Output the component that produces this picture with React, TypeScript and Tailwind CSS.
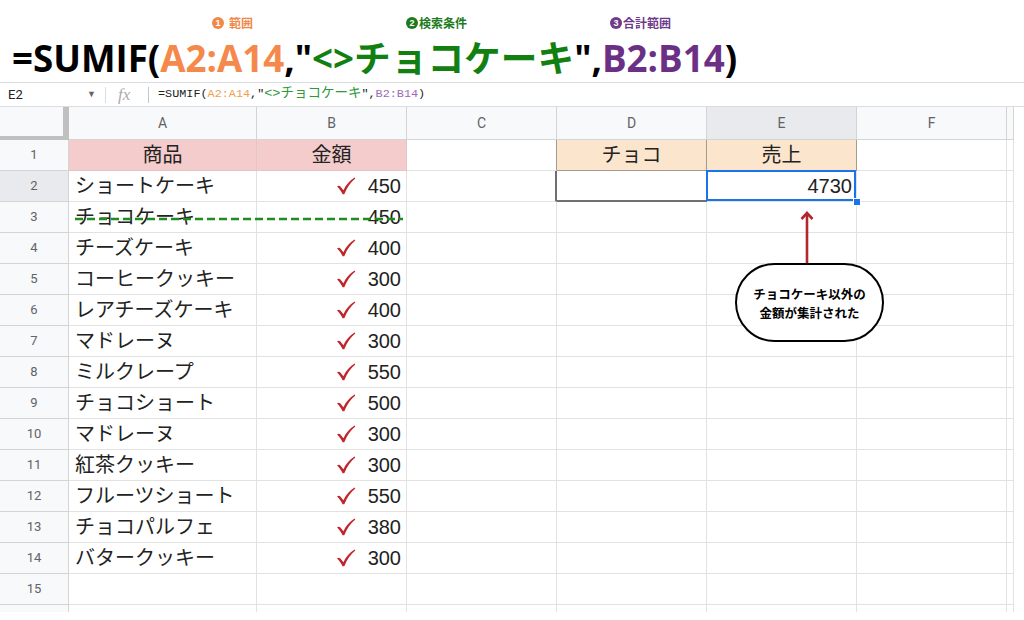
import React from "react";

const items: [string, string, boolean][] = [
  ["ショートケーキ", "450", true],
  ["チョコケーキ", "450", false],
  ["チーズケーキ", "400", true],
  ["コーヒークッキー", "300", true],
  ["レアチーズケーキ", "400", true],
  ["マドレーヌ", "300", true],
  ["ミルクレープ", "550", true],
  ["チョコショート", "500", true],
  ["マドレーヌ", "300", true],
  ["紅茶クッキー", "300", true],
  ["フルーツショート", "550", true],
  ["チョコパルフェ", "380", true],
  ["バタークッキー", "300", true],
];

const letters = ["A", "B", "C", "D", "E", "F", ""];

function Check() {
  return (
    <svg width="20" height="18" viewBox="0 0 20 18" className="shrink-0">
      <path
        d="M1 9.6 C2.3 8.6 3.4 8.6 4.4 9.6 L7.4 13.2 C10 8 13.6 3.6 18.6 0.6 L19.3 1.6 C14.8 5.2 11.2 10.2 8.3 17.2 L6.6 17.2 C5.1 14.2 3.1 11.6 1 9.6 Z"
        fill="#c0272d"
      />
    </svg>
  );
}

function Num({ n, color }: { n: string; color: string }) {
  return (
    <span
      className="flex h-[12px] w-[12px] shrink-0 items-center justify-center rounded-full text-[9px] leading-none text-white [font-family:'Liberation_Sans',sans-serif]"
      style={{ backgroundColor: color }}
    >
      {n}
    </span>
  );
}

function HeaderLabels() {
  return (
    <div className="flex h-[16px] text-[12px] font-bold leading-[16px] [font-family:'Noto_Sans_CJK_JP',sans-serif]">
      <div className="w-[212px]" />
      <div className="flex w-[194px] items-center gap-[5px] text-[#f0884a]">
        <Num n="1" color="#f0884a" />
        <span>範囲</span>
      </div>
      <div className="flex w-[204px] items-center gap-[1px] text-[#1d7a1d]">
        <Num n="2" color="#1d7a1d" />
        <span>検索条件</span>
      </div>
      <div className="flex items-center gap-[1px] text-[#6e3a8a]">
        <Num n="3" color="#6e3a8a" />
        <span>合計範囲</span>
      </div>
    </div>
  );
}

function BigFormula() {
  return (
    <div className="mt-[9px] h-[36px] pl-[12px] text-[36.7px] font-bold leading-[36px] whitespace-nowrap text-black [font-family:'Open_Sans','Noto_Sans_CJK_JP',sans-serif]">
      =SUMIF(<span className="text-[#f5894b]">A2:A14</span>,"
      <span className="text-[#118011]">&lt;&gt;チョコケーキ</span>",
      <span className="text-[#6b2f86]">B2:B14</span>)
    </div>
  );
}

function FormulaBar() {
  return (
    <div className="mt-[6px] flex h-[25px] items-center border-y border-[#dadce0] bg-white">
      <div className="flex w-[105px] items-center justify-between pl-[8px] pr-[9px] text-[13px] text-[#222] [font-family:Roboto,sans-serif]">
        <span>E2</span>
        <span className="text-[9px] text-[#666]">▼</span>
      </div>
      <div className="h-[16px] w-px bg-[#dadce0]" />
      <div className="w-[42px] pl-[12px] text-[17px] italic text-[#a8acb0] [font-family:'Liberation_Serif',serif]">fx</div>
      <div className="h-[16px] w-px bg-[#c4c7c5]" />
      <div className="pl-[9px] text-[11.8px] whitespace-nowrap text-[#222] [font-family:'Liberation_Mono','Noto_Sans_CJK_JP',monospace]">
        =SUMIF(<span className="text-[#f0a050]">A2:A14</span>,"
        <span className="text-[13.5px] text-[#2a9a3a]">&lt;&gt;チョコケーキ</span>",
        <span className="text-[#9b6bb5]">B2:B14</span>)
      </div>
    </div>
  );
}

function Cell({ r, c }: { r: number; c: number }) {
  const base = "relative flex items-center border-r border-b text-[20px] text-[#222] ";
  const item = r >= 2 && r <= 14 ? items[r - 2] : null;

  if (r === 1 && c <= 1) {
    return (
      <div className={base + "justify-center border-[#e2c6c6] bg-[#f4cccc]"}>
        {c === 0 ? "商品" : "金額"}
      </div>
    );
  }
  if (r === 1 && c >= 3 && c <= 4) {
    return (
      <div className={base + "justify-center border-[#a59a8f] bg-[#fce5cd]"}>
        {c === 3 ? "チョコ" : "売上"}
      </div>
    );
  }
  if (r === 1 && c === 2) {
    return <div className={base + "border-[#e2e2e2] border-r-[#a59a8f]"} />;
  }
  if (r === 2 && c === 2) {
    return <div className={base + "border-[#e2e2e2] border-r-2 border-r-[#707070]"} />;
  }
  if (r === 2 && c === 3) {
    return <div className={base + "border-[#707070] border-b-2"} />;
  }
  if (r === 2 && c === 4) {
    return (
      <div className={base + "z-10 justify-end pr-[4px] border-[#e2e2e2]"}>
        4730
        <div className="absolute -left-px -top-px right-0 bottom-0 border-2 border-[#1a73e8]" />
        <div className="absolute -right-[5px] -bottom-[5px] h-[8px] w-[8px] border border-white bg-[#1a73e8]" />
      </div>
    );
  }
  if (item && c === 0) {
    return (
      <div className={base + "px-[6px] whitespace-nowrap border-[#e2e2e2]"}>
        {item[0]}
        {r === 3 && (
          <svg className="absolute left-[6px] top-[15px] z-10" width="328" height="4">
            <line x1="0" y1="2" x2="328" y2="2" stroke="#1e8c1e" strokeWidth="2.6" strokeDasharray="8 4" />
          </svg>
        )}
      </div>
    );
  }
  if (item && c === 1) {
    return (
      <div className={base + "justify-end gap-[12px] pr-[5px] border-[#e2e2e2]"}>
        {item[2] && <Check />}
        <span>{item[1]}</span>
      </div>
    );
  }
  return <div className={base + "border-[#e2e2e2]"} />;
}

export default function App() {
  const rows = Array.from({ length: 15 }, (_, i) => i + 1);
  return (
    <div className="h-[620px] w-[1024px] overflow-hidden bg-white [font-family:'Liberation_Sans','Noto_Sans_CJK_JP',sans-serif]">
      <div className="pt-[15px]">
        <HeaderLabels />
        <BigFormula />
      </div>
      <FormulaBar />
      <div className="relative w-[1014px]">
        <div className="grid grid-cols-[69px_188px_150px_150px_150px_150px_150px_7px] grid-rows-[33px_repeat(15,31px)_7px]">
          <div className="border-r-[6px] border-b-[4px] border-[#c0c0c0] bg-[#f8f9fa]" />
          {letters.map((l, i) => (
            <div
              key={l + i}
              className={
                i === 4
                  ? "flex items-center justify-center border-r border-b border-[#d4d4d4] bg-[#e8eaed] text-[14px] text-[#5f6368] [font-family:Roboto,sans-serif]"
                  : "flex items-center justify-center border-r border-b border-[#d4d4d4] bg-[#f8f9fa] text-[14px] text-[#5f6368] [font-family:Roboto,sans-serif]"
              }
            >
              {l}
            </div>
          ))}
          {rows.map((r) => (
            <React.Fragment key={r}>
              <div
                className={
                  r === 2
                    ? "flex items-center justify-center border-r border-b border-[#d4d4d4] bg-[#e8eaed] text-[13px] text-[#5f6368] [font-family:Roboto,sans-serif]"
                    : "flex items-center justify-center border-r border-b border-[#d4d4d4] bg-[#f8f9fa] text-[13px] text-[#5f6368] [font-family:Roboto,sans-serif]"
                }
              >
                {r}
              </div>
              {letters.map((_, c) => (
                <Cell key={c} r={r} c={c} />
              ))}
            </React.Fragment>
          ))}
          <div className="border-r border-[#d4d4d4] bg-[#f8f9fa]" />
          {letters.map((_, c) => (
            <div key={c} className="border-r border-[#e2e2e2]" />
          ))}
        </div>

        <svg className="absolute left-[800px] top-[104px] z-20" width="14" height="52" viewBox="0 0 14 52">
          <line x1="7" y1="2" x2="7" y2="52" stroke="#b3262d" strokeWidth="2.6" />
          <polyline points="1.5,8 7,2 12.5,8" fill="none" stroke="#b3262d" strokeWidth="2.6" />
        </svg>

        <div className="absolute left-[735px] top-[156px] z-20 flex h-[79px] w-[149px] flex-col items-center justify-center rounded-full border-2 border-black bg-white text-[12.5px] font-bold leading-[19px] text-black [font-family:'Noto_Sans_CJK_JP',sans-serif]">
          <span>チョコケーキ以外の</span>
          <span>金額が集計された</span>
        </div>
      </div>
    </div>
  );
}
